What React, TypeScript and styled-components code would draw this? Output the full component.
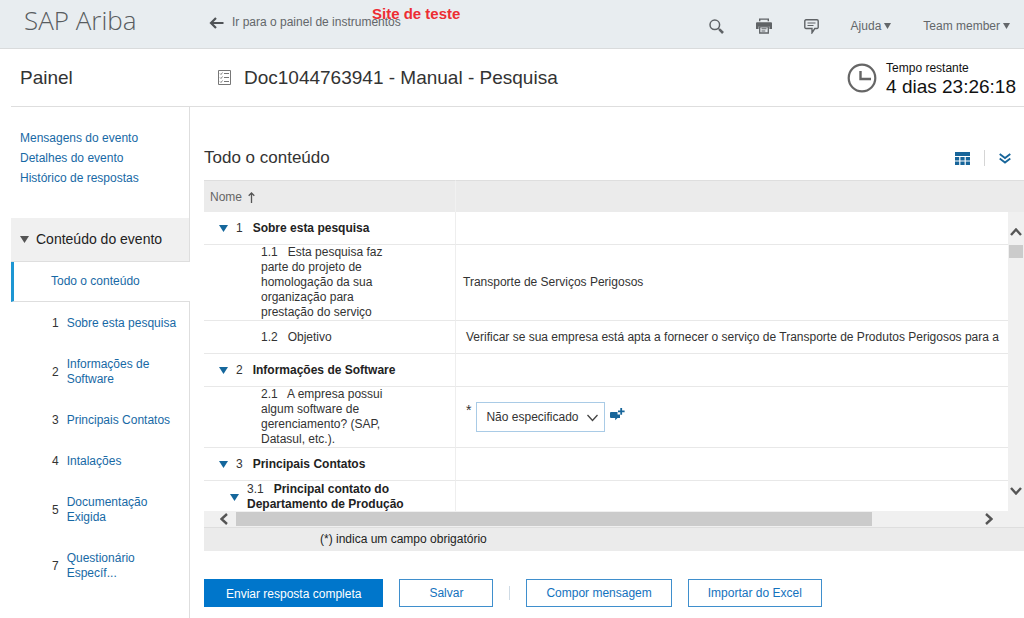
import React from 'react';
import styled, { createGlobalStyle, css } from 'styled-components';

const GlobalStyle = createGlobalStyle`
  *, *::before, *::after { box-sizing: border-box; }
  body {
    margin: 0;
    background: #fff;
    color: #333;
    font: 12px/15px "Liberation Sans", Arial, sans-serif;
  }
  button, select { font: inherit; color: inherit; }
  a { color: #1769a5; text-decoration: none; }
  h1, h2, p, ul, ol { margin: 0; padding: 0; font-weight: normal; }
  ul, ol { list-style: none; }
  svg { display: block; flex: none; }
`;

const Page = styled.div`
  display: flex;
  flex-direction: column;
  min-height: 100vh;
`;

/* ---------- top bar ---------- */

const TopBar = styled.header`
  position: relative;
  display: flex;
  height: 49px;
  padding: 0 14px 0 24px;
  background: #e8edf0;
  border-bottom: 1px solid #d9dbdc;
  color: #63676a;
`;

const Brand = styled.div`
  width: 185px;
  padding-top: 4px;
  font: 300 26px/32px "Open Sans", "Noto Sans", sans-serif;
  color: #585c5f;
`;

const BackLink = styled.a`
  display: flex;
  align-items: center;
  align-self: flex-start;
  gap: 8px;
  padding-top: 15px;
  color: #63676a;
`;

const TestNotice = styled.strong`
  position: absolute;
  left: 372px;
  top: 5px;
  font-size: 15px;
  line-height: 18px;
  color: #ed2d33;
`;

const Tools = styled.nav`
  display: flex;
  align-items: center;
  gap: 32px;
  margin-left: auto;
  padding-top: 4px;
`;

const PlainButton = styled.button`
  display: flex;
  align-items: center;
  gap: 3px;
  padding: 0;
  border: 0;
  background: none;
  cursor: pointer;
`;

/* ---------- event title ---------- */

const TitleBar = styled.div`
  display: flex;
  align-items: center;
  height: 58px;
  margin-left: 11px;
  padding-right: 8px;
  border-bottom: 1px solid #dedede;
`;

const PanelName = styled.div`
  width: 207px;
  padding-left: 9px;
  font-size: 19px;
  line-height: 22px;
`;

const DocTitle = styled.h1`
  display: flex;
  align-items: center;
  gap: 13px;
  font-size: 19px;
  line-height: 22px;
`;

const Timer = styled.div`
  display: flex;
  align-items: center;
  gap: 9px;
  margin-left: auto;
  color: #111;
`;

const TimerText = styled.div`
  padding-top: 4px;
`;

const TimeLeft = styled.div`
  font-size: 19px;
  line-height: 22px;
`;

/* ---------- side bar ---------- */

const Body = styled.div`
  display: flex;
  flex: 1;
`;

const Sidebar = styled.aside`
  flex: none;
  width: 179px;
  margin-left: 11px;
  padding-top: 24px;
  border-right: 1px solid #dedede;
`;

const EventLinks = styled.ul`
  display: flex;
  flex-direction: column;
  gap: 5px;
  padding: 0 9px 32px;
`;

const SectionToggle = styled(PlainButton)`
  gap: 7px;
  width: 100%;
  height: 44px;
  padding: 0 9px;
  background: #f0f0f0;
  border-bottom: 1px solid #dedede;
  font-size: 14px;
  color: #222;
`;

const CurrentItem = styled.a`
  display: flex;
  align-items: center;
  height: 40px;
  margin-right: -1px;
  padding-left: 37px;
  background: #fff;
  border-left: 3px solid #1d96d3;
  border-bottom: 1px solid #dedede;
`;

const ContentList = styled.ol`
  padding-top: 1px;
`;

const ContentItem = styled.li`
  display: flex;
  align-items: center;
  gap: 8px;
  padding: 13px 8px 13px 41px;
`;

/* ---------- main ---------- */

const Main = styled.main`
  flex: 1;
  min-width: 0;
  padding: 37px 0 11px 14px;
`;

const Heading = styled.div`
  display: flex;
  align-items: center;
  justify-content: space-between;
  height: 28px;
  margin-bottom: 8px;
  padding-right: 13px;
`;

const HeadingTitle = styled.h2`
  font-size: 17px;
  line-height: 20px;
`;

const HeadingTools = styled.div`
  display: flex;
  align-items: center;
  gap: 14px;
`;

const Rule = styled.span<{ $height: number; $color?: string }>`
  width: 1px;
  height: ${(p) => p.$height}px;
  background: ${(p) => p.$color ?? '#d5d5d5'};
`;

const Grid = styled.table`
  width: 100%;
  table-layout: fixed;
  border-collapse: separate;
  border-spacing: 0;
`;

const HeadCell = styled.th`
  height: 32px;
  padding: 1px 6px 0;
  background: #ebebeb;
  border-top: 1px solid #dedede;
  font-weight: normal;
  text-align: left;
  color: #666;

  & + & { border-left: 1px solid #f1f1f1; }
`;

const SortLabel = styled(PlainButton)`
  gap: 6px;
`;

const GridArea = styled.div`
  display: grid;
  grid-template-columns: minmax(0, 1fr) 16px;
  background: #f0f0f0;
`;

const Viewport = styled.div`
  height: 299px;
  overflow: hidden;
  background: #fff;
`;

const Cell = styled.td<{ $compact?: boolean }>`
  height: 33px;
  padding: 0;
  border-bottom: 1px solid #e8e8e8;
  overflow: hidden;
  white-space: nowrap;

  & + & {
    padding-left: 7px;
    border-left: 1px solid #eee;
  }
`;

const SectionName = styled.div<{ $level: 1 | 2 }>`
  display: flex;
  align-items: center;
  gap: 8px;
  padding-left: ${(p) => (p.$level === 1 ? 15 : 26)}px;
`;

const SectionText = styled.div`
  width: 170px;
  white-space: normal;
  color: #222;
`;

const Num = styled.span`
  margin-right: 10px;
  color: #333;
`;

const Question = styled.div`
  width: 190px;
  padding-left: 57px;
  white-space: normal;
`;

const Answer = styled.div`
  display: flex;
  align-items: center;
  gap: 5px;
`;

const Indent = styled.span`
  padding-left: 3px;
`;

const Required = styled.span`
  align-self: flex-start;
  padding-left: 3px;
  font-size: 14px;
  line-height: 16px;
`;

const SelectBox = styled.div`
  position: relative;
`;

const Select = styled.select`
  display: block;
  width: 129px;
  height: 30px;
  padding: 0 22px 0 9px;
  border: 1px solid #a9cbe6;
  border-radius: 0;
  background: #fff;
  appearance: none;
`;

const SelectArrow = styled.svg`
  position: absolute;
  right: 7px;
  top: 12px;
  pointer-events: none;
`;

const CommentButton = styled(PlainButton)`
  padding-bottom: 6px;
`;

const VerticalBar = styled.div`
  display: flex;
  flex-direction: column;
  align-items: center;
  padding: 16px 0;
`;

const HorizontalBar = styled.div`
  grid-column: 1 / -1;
  display: flex;
  align-items: center;
  height: 17px;
  padding: 0 31px 0 16px;
  border-bottom: 1px solid #dedede;
`;

const VerticalThumb = styled.div`
  width: 14px;
  height: 13px;
  margin: 9px 0 auto;
  background: #cbcbcb;
`;

const HorizontalTrack = styled.div`
  flex: 1;
  height: 14px;
  margin: 0 9px 0 8px;
`;

const HorizontalThumb = styled.div`
  width: 86%;
  height: 100%;
  background: #cbcbcb;
`;

const Footnote = styled.p`
  height: 23px;
  padding: 4px 0 0 116px;
  background: #ebebeb;
  color: #222;
`;

const Actions = styled.div`
  display: flex;
  align-items: center;
  gap: 16px;
  margin-top: 28px;
`;

const ActionButton = styled.button<{ $primary?: boolean }>`
  height: 28px;
  padding: 0 ${(p) => (p.$primary ? 21 : 19)}px;
  min-width: 94px;
  border: 1px solid #3f8fcd;
  border-radius: 0;
  background: #fff;
  color: #1472bd;
  cursor: pointer;
  ${(p) => p.$primary && css`
    border-color: #0076cb;
    background: #0076cb;
    color: #fff;
    padding-top: 3px;
  `}
`;

/* ---------- icons ---------- */

const Triangle = ({ w = 9, h = 7, color }: { w?: number; h?: number; color: string }) => (
  <svg width={w} height={h} viewBox="0 0 9 7" preserveAspectRatio="none" aria-hidden="true">
    <path d="M0 0h9L4.5 7z" fill={color} />
  </svg>
);

const Chevron = ({ dir }: { dir: 'up' | 'down' | 'left' | 'right' }) => {
  const paths = {
    up: ['M1 7l5-5.5L11 7', 12, 8],
    down: ['M1 1l5 5.5L11 1', 12, 8],
    left: ['M7 1L1.5 6 7 11', 8, 12],
    right: ['M1 1l5.5 5L1 11', 8, 12],
  } as const;
  const [d, w, h] = paths[dir];
  return (
    <svg width={w} height={h} viewBox={`0 0 ${w} ${h}`} aria-hidden="true">
      <path d={d} fill="none" stroke="#555" strokeWidth="2.4" />
    </svg>
  );
};

const BackArrow = () => (
  <svg width="15" height="12" viewBox="0 0 15 12" aria-hidden="true">
    <path d="M14.5 6H2M7 1L2 6l5 5" fill="none" stroke="#4f5356" strokeWidth="2.2" />
  </svg>
);

const SearchIcon = () => (
  <svg width="15" height="15" viewBox="0 0 15 15" aria-hidden="true">
    <circle cx="5.8" cy="5.8" r="4.8" fill="none" stroke="#5f6366" strokeWidth="1.5" />
    <path d="M9.3 9.3l1.6 1.6" stroke="#5f6366" strokeWidth="1.4" />
    <path d="M10.4 10.4l3.6 3.6" stroke="#5f6366" strokeWidth="2.6" />
  </svg>
);

const PrintIcon = () => (
  <svg width="16" height="16" viewBox="0 0 16 16" fill="#5f6366" aria-hidden="true">
    <path d="M3 .5h10v2.8h-1.4V1.8H4.4v1.5H3z" />
    <path d="M1 4.2h14a1 1 0 0 1 1 1V11h-2.6V8.6H2.6V11H0V5.2a1 1 0 0 1 1-1z" />
    <path d="M3.7 8.8h8.6V15H3.7z" fill="none" stroke="#5f6366" strokeWidth="1.3" />
    <path d="M5.5 10.3h5v1h-5zM5.5 12.4h3.8v1H5.5z" />
  </svg>
);

const ChatIcon = () => (
  <svg width="15" height="15" viewBox="0 0 15 15" fill="none" stroke="#5f6366" aria-hidden="true">
    <path d="M2 .8h11A1.2 1.2 0 0 1 14.2 2v6.2A1.2 1.2 0 0 1 13 9.5h-2.200L8 13.800V9.500H2A1.200 1.200 0 0 1 .8 8.200V2A1.200 1.200 0 0 1 2 .8z" strokeWidth="1.4" />
    <path d="M3.5 4h8M3.5 6.5h6" strokeWidth="1.2" />
  </svg>
);

const ChecklistIcon = () => (
  <svg width="13" height="15" viewBox="0 0 13 15" fill="none" stroke="#777" aria-hidden="true">
    <path d="M.5.5h12v14H.5z" />
    <path d="M2 3.500l1 1L4.500 2.500M2 7.500l1 1 1.500-2M2 11.500l1 1 1.500-2" strokeWidth=".9" />
    <path d="M6 3.500h5M6 7.500h5M6 11.500h5" />
  </svg>
);

const ClockIcon = () => (
  <svg width="30" height="30" viewBox="0 0 30 30" fill="none" stroke="#666" aria-hidden="true">
    <circle cx="15" cy="15" r="13.3" strokeWidth="2.2" />
    <path d="M13.5 8v8H24" strokeWidth="2.4" />
  </svg>
);

const TableIcon = () => (
  <svg width="15" height="13" viewBox="0 0 15 13" fill="#17659a" aria-hidden="true">
    <path d="M0 0h15v4H0zM0 5h4.200v3.500H0zM5.400 5h4.200v3.500H5.400zM10.800 5H15v3.500h-4.200zM0 9.500h4.200V13H0zM5.400 9.500h4.200V13H5.400zM10.800 9.500H15V13h-4.200z" />
  </svg>
);

const DoubleChevron = () => (
  <svg width="12" height="11" viewBox="0 0 12 11" fill="none" stroke="#17659a" strokeWidth="1.8" aria-hidden="true">
    <path d="M.7 1L6 5l5.300-4M.7 5.500l5.300 4 5.300-4" />
  </svg>
);

const SortArrow = () => (
  <svg width="7" height="11" viewBox="0 0 7 11" fill="none" stroke="#555" strokeWidth="1.3" aria-hidden="true">
    <path d="M3.500 11V1M.7 3.800l2.800-2.800 2.800 2.800" />
  </svg>
);

const AddCommentIcon = () => (
  <svg width="15" height="13" viewBox="0 0 15 13" fill="#17659a" aria-hidden="true">
    <path d="M1 4h6.500v2.500H10V10H7.500l-2.300 2.300V10H1a1 1 0 0 1-1-1V5a1 1 0 0 1 1-1z" />
    <path d="M10.300 0h1.800v2.400h2.500v1.800h-2.500v2.500h-1.800V4.200H8V2.400h2.300z" />
  </svg>
);

/* ---------- page ---------- */

const contents = [
  ['1', 'Sobre esta pesquisa'],
  ['2', 'Informações de Software'],
  ['3', 'Principais Contatos'],
  ['4', 'Intalações'],
  ['5', 'Documentação Exigida'],
  ['7', 'Questionário Específ...'],
];

const Section = ({ num, level = 1, children }: { num: string; level?: 1 | 2; children: string }) => (
  <tr>
    <Cell>
      <SectionName $level={level}>
        <PlainButton aria-label={`Recolher ${num}`}><Triangle color="#15679c" /></PlainButton>
        <SectionText><Num>{num}</Num><b>{children}</b></SectionText>
      </SectionName>
    </Cell>
    <Cell />
  </tr>
);

const Item = ({ num, text, children }: { num: string; text: string; children: React.ReactNode }) => (
  <tr>
    <Cell><Question>{`${num}\u00a0\u00a0 ${text}`}</Question></Cell>
    <Cell>{children}</Cell>
  </tr>
);

const Columns = () => (
  <colgroup><col width="251" /><col /></colgroup>
);

export default function App() {
  return (
    <Page>
      <GlobalStyle />
      <TopBar>
        <Brand>SAP Ariba</Brand>
        <BackLink href="#painel"><BackArrow />Ir para o painel de instrumentos</BackLink>
        <TestNotice>Site de teste</TestNotice>
        <Tools>
          <PlainButton aria-label="Pesquisar"><SearchIcon /></PlainButton>
          <PlainButton aria-label="Imprimir"><PrintIcon /></PlainButton>
          <PlainButton aria-label="Comentários"><ChatIcon /></PlainButton>
          <PlainButton>Ajuda<Triangle w={7} h={6} color="#63676a" /></PlainButton>
          <PlainButton>Team member<Triangle w={7} h={6} color="#63676a" /></PlainButton>
        </Tools>
      </TopBar>

      <TitleBar>
        <PanelName>Painel</PanelName>
        <DocTitle><ChecklistIcon />Doc1044763941 - Manual - Pesquisa</DocTitle>
        <Timer>
          <ClockIcon />
          <TimerText>
            Tempo restante
            <TimeLeft>4 dias 23:26:18</TimeLeft>
          </TimerText>
        </Timer>
      </TitleBar>

      <Body>
        <Sidebar>
          <EventLinks>
            <li><a href="#mensagens">Mensagens do evento</a></li>
            <li><a href="#detalhes">Detalhes do evento</a></li>
            <li><a href="#historico">Histórico de respostas</a></li>
          </EventLinks>
          <SectionToggle><Triangle color="#555" />Conteúdo do evento</SectionToggle>
          <CurrentItem href="#todo">Todo o conteúdo</CurrentItem>
          <ContentList>
            {contents.map(([num, name]) => (
              <ContentItem key={num}>
                <span>{num}</span>
                <a href={`#item-${num}`}>{name}</a>
              </ContentItem>
            ))}
          </ContentList>
        </Sidebar>

        <Main>
          <Heading>
            <HeadingTitle>Todo o conteúdo</HeadingTitle>
            <HeadingTools>
              <PlainButton aria-label="Opções da tabela"><TableIcon /></PlainButton>
              <Rule $height={16} />
              <PlainButton aria-label="Expandir tudo"><DoubleChevron /></PlainButton>
            </HeadingTools>
          </Heading>

          <Grid>
            <Columns />
            <thead>
              <tr>
                <HeadCell><SortLabel>Nome<SortArrow /></SortLabel></HeadCell>
                <HeadCell />
              </tr>
            </thead>
          </Grid>
          <GridArea>
            <Viewport>
              <Grid>
                <Columns />
                <tbody>
                  <Section num="1">Sobre esta pesquisa</Section>
                  <Item num="1.1" text="Esta pesquisa faz parte do projeto de homologação da sua organização para prestação do serviço">
                    Transporte de Serviços Perigosos
                  </Item>
                  <Item num="1.2" text="Objetivo">
                    <Indent>Verificar se sua empresa está apta a fornecer o serviço de Transporte de Produtos Perigosos para a</Indent>
                  </Item>
                  <Section num="2">Informações de Software</Section>
                  <Item num="2.1" text="A empresa possui algum software de gerenciamento? (SAP, Datasul, etc.).">
                    <Answer>
                      <Required>*</Required>
                      <SelectBox>
                        <Select aria-label="A empresa possui algum software de gerenciamento?">
                          <option>Não especificado</option>
                        </Select>
                        <SelectArrow width="11" height="8" viewBox="0 0 11 8" fill="none" stroke="#444" strokeWidth="1.3">
                          <path d="M.5 1l5 5.500 5-5.500" />
                        </SelectArrow>
                      </SelectBox>
                      <CommentButton aria-label="Adicionar comentário"><AddCommentIcon /></CommentButton>
                    </Answer>
                  </Item>
                  <Section num="3">Principais Contatos</Section>
                  <Section num="3.1" level={2}>Principal contato do Departamento de Produção</Section>
                </tbody>
              </Grid>
            </Viewport>
            <VerticalBar>
              <Chevron dir="up" />
              <VerticalThumb />
              <Chevron dir="down" />
            </VerticalBar>
            <HorizontalBar>
              <Chevron dir="left" />
              <HorizontalTrack><HorizontalThumb /></HorizontalTrack>
              <Chevron dir="right" />
            </HorizontalBar>
          </GridArea>
          <Footnote>(*) indica um campo obrigatório</Footnote>

          <Actions>
            <ActionButton $primary>Enviar resposta completa</ActionButton>
            <ActionButton>Salvar</ActionButton>
            <Rule $height={14} $color="#cfdbe5" />
            <ActionButton>Compor mensagem</ActionButton>
            <ActionButton>Importar do Excel</ActionButton>
          </Actions>
        </Main>
      </Body>
    </Page>
  );
}
